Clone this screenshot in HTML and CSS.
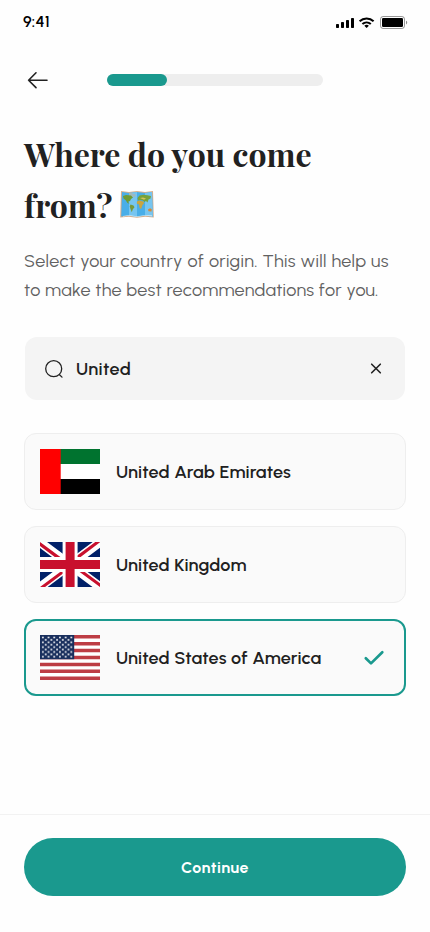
FILE: index.html
```html
<!DOCTYPE html>
<html lang="en">
<head>
<meta charset="utf-8">
<meta name="viewport" content="width=device-width, initial-scale=1">
<title>Country of origin</title>
<link rel="stylesheet" href="styles.css">
</head>
<body>
<div class="screen">
  <div class="status">
    <span class="time">9:41</span>
    <svg class="status-icons" width="72" height="14" viewBox="0 0 72 14">
      <rect x="1" y="8" width="3" height="4" rx=".7"/>
      <rect x="6" y="6" width="3" height="6" rx=".7"/>
      <rect x="11" y="4" width="3" height="8" rx=".7"/>
      <rect x="16" y="2" width="3" height="10" rx=".7"/>
      <g fill="none" stroke="#000" stroke-width="2">
        <path d="M24.6 5.2a10.2 10.2 0 0 1 14 0"/>
        <path d="M27.4 8.1a6.2 6.2 0 0 1 8.4 0"/>
      </g>
      <path d="M29.3 9.7a3.4 3.4 0 0 1 4.6 0l-2.3 2.4z"/>
      <rect x="45.5" y=".5" width="24" height="12" rx="2.6" fill="none" stroke="#000" stroke-opacity=".4"/>
      <rect x="47" y="2" width="21" height="9" rx="1.2"/>
      <path d="M71 4.8c.9.3 1.2 1 1.2 1.8s-.3 1.4-1.2 1.8z" fill-opacity=".45"/>
    </svg>
  </div>

  <header class="topbar">
    <svg class="back" width="28" height="28" viewBox="0 0 28 28"><path d="M23 14.2H4.6M12 6.8l-7.4 7.4 7.4 7.4" fill="none" stroke="#212121" stroke-width="1.6" stroke-linecap="round" stroke-linejoin="round"/></svg>
    <div class="progress"><div class="progress-fill"></div></div>
  </header>

  <main class="content">
    <h1 class="title"><span class="line">Where do you come</span><span class="line">from?<svg class="map" width="34" height="29" viewBox="0 0 34 29">
      <path d="M1 1l8 1 8-1 8 1 8-1 .8 26.6-8.6-.9-8.2 1-8.2-1-8.6.9z" fill="#d8ae8b"/>
      <path d="M2 2l7 1 8-1 8 1 7-1 .8 24.5-7.8-.8-8 1-8-1-7.8.8z" fill="#49aee8"/>
      <path d="M9 3l8-1v24.700l-8-1zM25 3l7-1 .8 24.500-7.800-.8z" fill="#76c5f0"/>
      <path d="M9 3l3.500-.4v4l-2 2-1.500-2zM12 4.500l3-.8.800 2-2 1.800z" fill="#9fb9bd"/>
      <path d="M3 6l3-1 5 .5 2 2-2 1.500-1 2-2 .8 1.500 2-2-.8-2-3-2-1.500z" fill="#6f9b34"/>
      <path d="M10.500 14.500l3 1 1 1.700-1.700 2-1 3-1.300-3.200-.8-2.500z" fill="#77983a"/>
      <path d="M17.500 8l2-2.500 4-.8 4 .5 3.500.8-.5 2.500-2 1-1 3-1.500-1.500-1.500 1-1.500-1.500-2-.5-3 .5z" fill="#78a23b"/>
      <path d="M17 11.200l3-.7 3.200 1 1 1.500-1.700 2-1.400 4-1.500-1-.6-3.500-2.200-1z" fill="#c9a541"/>
      <path d="M20 8l3-.5 3 1-2 1.200z" fill="#d7c35a"/>
      <path d="M28 19.500l2-1.200 1.800 1-.3 2.200-3-.2z" fill="#d48a38"/>
      <path d="M3 26l6-.8 8 1 8-1 7 .3v.7l-7-.4-8 1-8-1-6 .8z" fill="#eaf3f5"/>
    </svg></span></h1>
    <p class="intro"><span class="line intro-first">Select your country of origin. This will help us</span><span class="line">to make the best recommendations for you.</span></p>

    <div class="search">
      <svg class="search-icon" width="20" height="20" viewBox="0 0 20 20" fill="none" stroke="#212121" stroke-width="1.3" stroke-linecap="round"><circle cx="9.700" cy="9.700" r="8"/><path d="M15.500 15.700l2.500 2.400"/></svg>
      <span class="query">United</span>
      <svg class="clear" width="20" height="20" viewBox="0 0 20 20"><path d="M5.700 5.200l8.600 8.600M14.300 5.200l-8.600 8.600" stroke="#212121" stroke-width="1.600" stroke-linecap="round"/></svg>
    </div>

    <div class="countries">
      <div class="country">
        <svg class="flag" viewBox="0 0 60 45"><path fill="#fff" d="M0 0h60v45H0z"/><path fill="#00732f" d="M0 0h60v15H0z"/><path d="M0 30h60v15H0z"/><path fill="red" d="M0 0h20.700v45H0z"/></svg>
        <span class="name">United Arab Emirates</span>
      </div>
      <div class="country">
        <svg class="flag" viewBox="0 0 640 480"><path fill="#012169" d="M0 0h640v480H0z"/><path fill="#fff" d="m75 0 244 181L562 0h78v62L400 241l240 178v61h-80L320 301 81 480H0v-60l239-178L0 64V0z"/><path fill="#c8102e" d="m424 281 216 159v40L369 281zm-184 20 6 35L54 480H0zM640 0v3L391 191l2-44L590 0zM0 0l239 176h-60L0 42z"/><path fill="#fff" d="M241 0v480h160V0zM0 160v160h640V160z"/><path fill="#c8102e" d="M0 193v96h640v-96zM273 0v480h96V0z"/></svg>
        <span class="name">United Kingdom</span>
      </div>
      <div class="country selected">
        <svg class="flag" viewBox="0 0 640 480">
          <defs><pattern id="stars" width="60.800" height="51.700" patternUnits="userSpaceOnUse"><g fill="#fff"><circle cx="30.400" cy="25.850" r="10"/><circle cx="0" cy="0" r="10"/><circle cx="60.800" cy="0" r="10"/><circle cx="0" cy="51.700" r="10"/><circle cx="60.800" cy="51.700" r="10"/></g></pattern></defs>
          <path fill="#fff" d="M0 0h640v480H0z"/>
          <path stroke="#bd3d44" stroke-width="36.920" d="M0 18.460h640M0 92.300h640M0 166.150h640M0 240h640M0 313.850h640M0 387.700h640M0 461.540h640"/>
          <path fill="#192f5d" d="M0 0h364.800v258.500H0z"/>
          <path fill="url(#stars)" d="M15 12h335v234H15z"/>
        </svg>
        <span class="name">United States of America</span>
        <svg class="check" width="24" height="24" viewBox="0 0 24 24"><path d="M3.800 12.200l5.200 5.200L20.300 6.300" fill="none" stroke="#1a998e" stroke-width="2.700" stroke-linecap="round" stroke-linejoin="round"/></svg>
      </div>
    </div>
  </main>

  <footer class="footer"><button class="continue">Continue</button></footer>
</div>
</body>
</html>
```

FILE: styles.css
```css
* { box-sizing: border-box; }
body {
  margin: 0;
  background: #fefefe;
  color: #212121;
  font-family: Urbanist, Lato, "Liberation Sans", sans-serif;
}
svg { display: block; flex: none; }
.screen { width: 430px; height: 932px; display: flex; flex-direction: column; overflow: hidden; }
.status { height: 44px; padding: 0 23px; display: flex; align-items: center; justify-content: space-between; }
.time { font-size: 16px; font-weight: 600; line-height: 20px; color: #000; letter-spacing: .2px; }
.status-icons { margin-top: 1px; overflow: visible; }
.topbar { height: 72px; padding: 0 24px; display: flex; align-items: center; }
.progress { width: 216px; height: 12px; margin-left: 55px; border-radius: 6px; background: #eee; }
.progress-fill { width: 60px; height: 12px; border-radius: 6px; background: #1a998e; }
.content { flex: 1; padding: 12px 24px 0; }
.line { display: flex; align-items: center; white-space: nowrap; }
.title { margin: 0; font: 700 32px/51px "Playfair Display", "Liberation Serif", serif; }
.map { margin: -1px 0 0 7.500px; }
.intro { margin: 17px 0 0; color: #616161; font-size: 18px; line-height: 29px; letter-spacing: .25px; }
.intro-first { letter-spacing: .35px; }
.search { height: 63px; margin: 32px 1px 0; padding: 0 19px; display: flex; align-items: center; border-radius: 12px; background: #f4f4f4; }
.query { flex: 1; margin-left: 12px; font-size: 18px; font-weight: 600; letter-spacing: .4px; }
.countries { margin-top: 33px; display: flex; flex-direction: column; gap: 16px; }
.country { height: 77px; padding: 0 15px; display: flex; align-items: center; border: 1px solid #eee; border-radius: 12px; background: #fafafa; }
.selected { padding: 0 18px 0 14px; border: 2px solid #1a998e; }
.flag { width: 60px; height: 45px; }
.name { flex: 1; margin-left: 16px; font-size: 18px; font-weight: 600; letter-spacing: .13px; white-space: nowrap; }
.footer { height: 118px; padding: 23px 24px 0; border-top: 1px solid #f2f2f2; }
.continue { display: block; width: 100%; height: 58px; padding: 2px 0 0; border: 0; border-radius: 29px; background: #1a998e; color: #fff; font: 700 16px/20px Urbanist, Lato, "Liberation Sans", sans-serif; letter-spacing: .45px; }
```
